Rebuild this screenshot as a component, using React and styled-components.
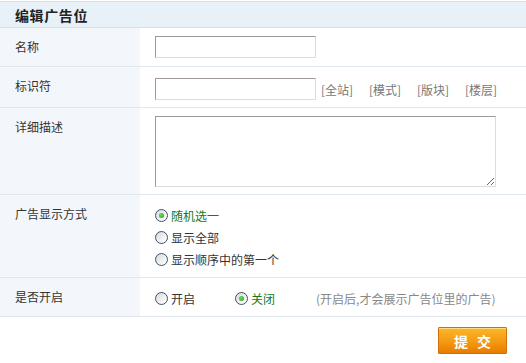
import React, { useState } from 'react';
import styled, { createGlobalStyle } from 'styled-components';

const GlobalStyle = createGlobalStyle`
	html, body {
		margin: 0;
		padding: 0;
		background: #fff;
	}
	body {
		font-family: 'Noto Sans CJK SC', 'Noto Sans', sans-serif;
		font-size: 12px;
		color: #333;
	}
`;

const App = () => {
	const [mode, setMode] = useState('random');
	const [open, setOpen] = useState('off');

	const modes = [
		{ key: 'random', text: '随机选一' },
		{ key: 'all', text: '显示全部' },
		{ key: 'first', text: '显示顺序中的第一个' },
	];

	return (
		<>
			<GlobalStyle />
			<Page>
				<Header>
					<h1>编辑广告位</h1>
				</Header>
				<Row>
					<Label>名称</Label>
					<Field $pad='8px 15px 8px'>
						<TextInput type='text' />
					</Field>
				</Row>
				<Row>
					<Label>标识符</Label>
					<Field $pad='11px 15px 7px'>
						<TextInput type='text' />
						<Tags>
							<Tag>[全站]</Tag>
							<Tag>[模式]</Tag>
							<Tag>[版块]</Tag>
							<Tag>[楼层]</Tag>
						</Tags>
					</Field>
				</Row>
				<Row>
					<Label>详细描述</Label>
					<Field $pad='8px 15px 7px'>
						<TextArea />
					</Field>
				</Row>
				<Row>
					<Label>广告显示方式</Label>
					<Field $pad='9px 15px 7px' $column>
						{modes.map((m) => (
							<Option
								key={m.key}
								$active={mode === m.key}
								onClick={() => setMode(m.key)}>
								<Dot $checked={mode === m.key} />
								{m.text}
							</Option>
						))}
					</Field>
				</Row>
				<Row>
					<Label>是否开启</Label>
					<Field $pad='9px 15px 7px'>
						<Option
							$width='80px'
							$active={open === 'on'}
							onClick={() => setOpen('on')}>
							<Dot $checked={open === 'on'} />
							开启
						</Option>
						<Option
							$width='81px'
							$active={open === 'off'}
							onClick={() => setOpen('off')}>
							<Dot $checked={open === 'off'} />
							关闭
						</Option>
						<Hint>(开启后,才会展示广告位里的广告)</Hint>
					</Field>
				</Row>
				<Footer>
					<SubmitButton type='button'>提 交</SubmitButton>
				</Footer>
			</Page>
		</>
	);
};

const Page = styled.div`
	width: 526px;
	padding-top: 1px;
`;
const Header = styled.div`
	height: 25px;
	display: flex;
	align-items: center;
	padding-left: 15px;
	background: #e8f0f8;
	border-top: 1px solid #d3dfeb;
	border-bottom: 1px solid #d3dfeb;
	& h1 {
		margin: 0;
		font-size: 14px;
		font-weight: 700;
		letter-spacing: 0.6px;
		color: #222;
	}
`;
const Row = styled.div`
	display: grid;
	grid-template-columns: 140px 1fr;
	border-bottom: 1px solid #e0e7ee;
`;
const Label = styled.div`
	background: #f3f7fc;
	padding: 12px 0 0 15px;
	line-height: 14px;
	color: #333;
`;
const Field = styled.div`
	display: flex;
	flex-direction: ${(p) => (p.$column ? 'column' : 'row')};
	align-items: ${(p) => (p.$column ? 'flex-start' : 'center')};
	padding: ${(p) => p.$pad};
`;
const TextInput = styled.input`
	box-sizing: border-box;
	width: 161px;
	height: 22px;
	margin: 0;
	padding: 0 3px;
	border-top: 1px solid #9a9a9a;
	border-left: 1px solid #9a9a9a;
	border-right: 1px solid #dcdcdc;
	border-bottom: 1px solid #dcdcdc;
	background: #fff;
	outline: none;
`;
const TextArea = styled.textarea`
	box-sizing: border-box;
	display: block;
	width: 341px;
	height: 71px;
	margin: 0;
	padding: 2px;
	border-top: 1px solid #9a9a9a;
	border-left: 1px solid #9a9a9a;
	border-right: 1px solid #dcdcdc;
	border-bottom: 1px solid #dcdcdc;
	outline: none;
`;
const Tags = styled.div`
	display: flex;
	margin-left: 5px;
`;
const Tag = styled.span`
	width: 48px;
	color: #777;
	cursor: pointer;
`;
const Option = styled.label`
	display: flex;
	align-items: center;
	height: 22px;
	width: ${(p) => p.$width || 'auto'};
	color: ${(p) => (p.$active ? '#177a17' : '#333')};
	cursor: pointer;
`;
const Dot = styled.span`
	position: relative;
	box-sizing: border-box;
	width: 13px;
	height: 13px;
	margin-right: 3px;
	border-radius: 50%;
	border: 1px solid #3d5266;
	background: linear-gradient(135deg, #d4d8dc 0%, #f2f2f2 60%, #ffffff 100%);
	&::after {
		content: '';
		display: ${(p) => (p.$checked ? 'block' : 'none')};
		position: absolute;
		left: 3px;
		top: 3px;
		width: 5px;
		height: 5px;
		border-radius: 50%;
		background: radial-gradient(circle at 40% 40%, #6fdc5a, #1e9a1e);
	}
`;
const Hint = styled.span`
	color: #888;
`;
const Footer = styled.div`
	display: flex;
	justify-content: flex-end;
	padding: 10px 19px 0 0;
`;
const SubmitButton = styled.button`
	box-sizing: border-box;
	width: 69px;
	height: 27px;
	margin: 0;
	padding: 0;
	border: 1px solid #d0700a;
	border-radius: 1px;
	background: linear-gradient(#fdb62a, #f39a10 55%, #ea7b00);
	box-shadow: inset 0 1px 0 rgba(255, 230, 150, 0.8);
	color: #fff;
	font-family: 'Noto Sans CJK SC', sans-serif;
	font-size: 14px;
	font-weight: 700;
	letter-spacing: 3px;
	text-indent: 3px;
	cursor: pointer;
`;

export default App;
